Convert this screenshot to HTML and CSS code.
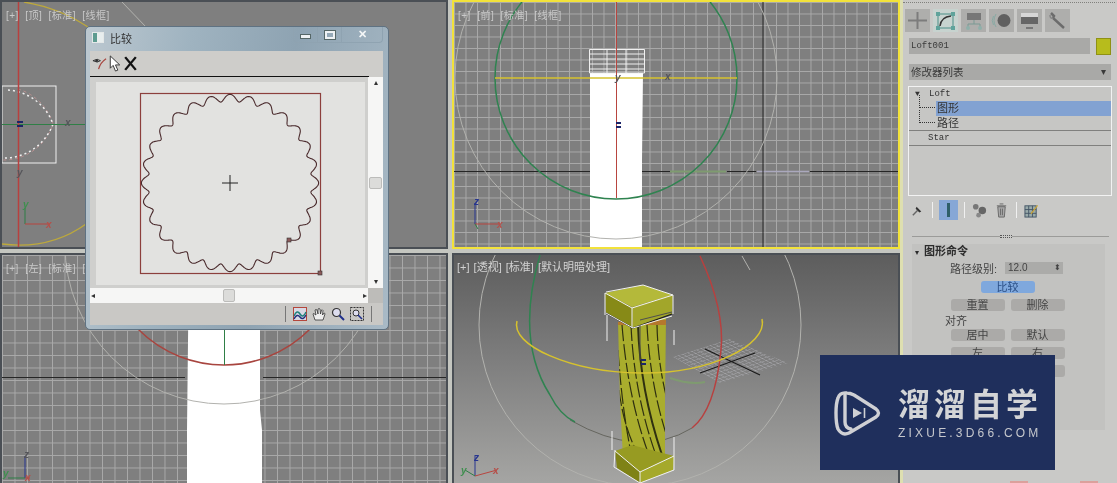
FILE: index.html
```html
<!DOCTYPE html>
<html lang="zh-CN">
<head>
    <meta charset="UTF-8">
    <meta name="viewport" content="width=device-width, initial-scale=1.0">
    <title>放样比较</title>
    <link rel="stylesheet" href="styles.css">
</head>
<body>
<div class="app">
    <div class="viewports">
        <!-- top -->
        <div class="viewport">
            <svg class="scene" viewBox="2 2 444 245">
                <path class="ln-yellow" d="M24 2 Q60 8 88 27"/>
                <path class="ln-yellow" d="M2 244 Q50 250 86 224"/>
                <path class="ln-grey" d="M122 2 L146 27"/>
                <rect x="2" y="86" width="54" height="77" class="ln-white"/>
                <path class="ln-pink" stroke-dasharray="3 3" d="M18 89 A52 52 0 0 1 53 124 A52 52 0 0 1 2 160"/>
                <path class="ln-white dashed" d="M8 90 A52 52 0 0 1 53 124 A52 52 0 0 1 2 158"/>
                <path class="ln-green" d="M2 124.500 H85"/>
                <path class="ln-red wide" d="M18.500 2 V247"/>
                <path class="ln-blue wide" d="M17 122 H23 M17 126 H23"/>
                <path class="ln-green" d="M25 224 V208"/>
                <path class="ln-red" d="M25 224 H50"/>
                <text x="65" y="126" class="ax ax-dark">x</text>
                <text x="17" y="176" class="ax ax-dark">y</text>
                <text x="23" y="208" class="ax ax-green">y</text>
                <text x="46" y="228" class="ax ax-red">x</text>
            </svg>
            <span class="vp-label">[+] [顶] [标准] [线框]</span>
        </div>

        <!-- front -->
        <div class="viewport active grid">
            <svg class="scene" viewBox="454 2 444 245">
                <path class="ln-black" d="M454 171.500 H592 M641 171.500 H670 M727 171.500 H756 M810 171.500 H898"/>
                <path class="ln-sage" d="M670 171.500 H726"/>
                <path class="ln-lilac" d="M757 171.500 H809"/>
                <path class="ln-black" d="M763 2 V247"/>
                <path class="fill-white" d="M590 73 H643 L642 160 V247 H590 Z"/>
                <circle cx="616" cy="78" r="161" class="ln-grey"/>
                <circle cx="616" cy="78" r="121" class="ln-green wide"/>
                <path class="ln-yellow wide" d="M495 78 H737"/>
                <path class="ln-white" d="M589.500 49.500 H644.500 V73 H589.500 Z M589.500 54 H644.500 M589.500 59 H644.500 M589.500 64 H644.500 M589.500 69 H644.500 M607 49 V73 M626 49 V73"/>
                <path class="ln-red" d="M616.500 2 V198"/>
                <path class="ln-blue wide" d="M616 123 H621 M616 127 H621"/>
                <path class="ln-blue" d="M475 224 V203"/>
                <path class="ln-red" d="M475 224 H500"/>
                <path class="ln-green" d="M475 224 L478 229"/>
                <text x="615" y="81" class="ax ax-dark">y</text>
                <text x="665" y="80" class="ax ax-dark">x</text>
                <text x="474" y="205" class="ax ax-blue">z</text>
                <text x="497" y="228" class="ax ax-red">x</text>
            </svg>
            <span class="vp-label">[+] [前] [标准] [线框]</span>
        </div>

        <!-- left -->
        <div class="viewport grid grid-left">
            <svg class="scene" viewBox="2 255 444 228">
                <path class="ln-black" d="M2 377.500 H185 M263 377.500 H448"/>
                <path class="fill-white" d="M189 253 H260 V410 L262 430 V483 H187 V430 Z"/>
                <circle cx="224" cy="245" r="159" class="ln-grey"/>
                <circle cx="224" cy="244" r="121" class="ln-redarc wide"/>
                <path class="ln-green" d="M224.500 255 V365"/>
                <path class="ln-blue" d="M25 478 V456"/>
                <path class="ln-green" d="M25 478 H8"/>
                <path class="ln-red" d="M25 478 H30"/>
                <text x="24" y="458" class="ax ax-dark">z</text>
                <text x="3" y="477" class="ax ax-green">y</text>
                <text x="25" y="481" class="ax ax-red">x</text>
            </svg>
            <span class="vp-label">[+] [左] [标准] [线框]</span>
        </div>

        <!-- perspective -->
        <div class="viewport perspective">
            <svg class="scene" viewBox="454 255 444 228">
                <defs>
                    <pattern id="plane-cells" patternUnits="userSpaceOnUse" width="8" height="8" patternTransform="matrix(.57 -.18 .47 .26 673 357)">
                        <path d="M0 0 H8 M0 0 V8" stroke="#bdbdc4" stroke-width="1.300" fill="none"/>
                    </pattern>
                    <clipPath id="shaft-clip">
                        <path d="M618 322 L666 318 L665 400 L665 458 L623 458 L620 400 Z"/>
                    </clipPath>
                </defs>
                <circle cx="640" cy="325" r="161" class="ln-grey"/>
                <path class="ln-greyarc wide" d="M570 420 Q640 460 692 428"/>
                <path fill="url(#plane-cells)" d="M673 357 L730 339 L788 363 L720 383 Z"/>
                <path class="ln-black wide" d="M705 349 L760 375 M700 373 L755 353"/>
                <path class="ln-green wide" d="M540 255 Q515 340 550 395 Q560 415 575 422"/>
                <path class="ln-sage wide" d="M670 378 Q690 385 705 382"/>
                <path class="ln-red wide" d="M700 256 Q725 310 721 350 Q715 410 692 428"/>
                <path class="ln-grey" d="M742 256 L750 270"/>

                <g clip-path="url(#shaft-clip)">
                    <rect x="615" y="315" width="55" height="150" fill="#a9ad2d"/>
                    <path class="stripe" d="M622 325 Q628 400 650 458"/>
                    <path class="stripe" d="M631 325 Q634 395 657 458"/>
                    <path class="stripe thick" d="M638 325 Q640 390 662 455"/>
                    <path class="stripe" d="M647 325 Q650 385 668 440"/>
                    <path class="stripe" d="M657 325 Q658 370 670 410"/>
                    <path class="stripe" d="M618 350 Q622 410 632 458"/>
                    <path class="stripe" d="M619 390 Q624 430 640 458"/>
                    <rect x="615" y="320" width="52" height="5" fill="#b5782c"/>
                </g>
                <path class="ln-yellow wide" d="M517 321 C510 345 570 372 640 373 C710 374 768 345 762 319"/>

                <path fill="#878a17" d="M605 293 L632 307 L633 328 L606 313 Z"/>
                <path fill="#a2a62a" d="M632 307 L673 295 L672 314 L633 328 Z"/>
                <path fill="#b4b93a" d="M605 293 L643 285 L673 295 L632 307 Z"/>
                <path class="ln-black wide" d="M606 313 L633 328 L672 314"/>
                <path class="ln-white wide" d="M605 293 V315 M606 292 L643 285 L673 295 L632 308 L605 293 M632 308 V328 M673 295 V314 M606 313 L633 328 L672 316 M607 315 V341 M674 330 V345"/>
                <path class="ln-dark" d="M640 325 V360 M640 320 L672 312"/>
                <path class="ln-blue wide" d="M641 360 H646 M641 364 H646"/>

                <path fill="#7f8216" d="M615 451 L640 472 L640 483 L617 468 Z"/>
                <path fill="#a5a92b" d="M640 472 L674 456 L673 470 L640 483 Z"/>
                <path fill="#979b22" d="M615 451 L632 445 L674 456 L640 472 Z"/>
                <path class="ln-white wide" d="M615 450 L614 467 L640 483 M640 472 L674 456 V470 L640 483 V472 M615 451 L640 472 M612 431 V450 M674 437 V456"/>

                <path class="ln-blue" d="M475 476 V455"/>
                <path class="ln-red" d="M475 476 L497 470"/>
                <path class="ln-green" d="M475 476 L465 470"/>
                <text x="474" y="461" class="ax ax-blue">z</text>
                <text x="493" y="474" class="ax ax-red">x</text>
                <text x="461" y="474" class="ax ax-green">y</text>
            </svg>
            <span class="vp-label">[+] [透视] [标准] [默认明暗处理]</span>
        </div>
    </div>

    <aside class="panel">
        <div class="panel-dots"></div>
        <div class="tabs">
            <div class="tab"><svg viewBox="0 0 25 23"><path d="M12.500 3 V20 M3 11.500 H22" stroke="#7c7c7c" stroke-width="2"/></svg></div>
            <div class="tab tab-on"><svg viewBox="0 0 25 23"><rect x="5" y="5" width="15" height="14" fill="none" stroke="#4d8f88"/><path d="M3 3h4v4h-4z M18 3h4v4h-4z M3 17h4v4h-4z M18 17h4v4h-4z" fill="#5fa39b"/><path d="M7 17 Q8 8 18 7" fill="none" stroke="#333" stroke-width="1.500"/></svg></div>
            <div class="tab"><svg viewBox="0 0 25 23"><rect x="6" y="4" width="14" height="7" fill="#777"/><path d="M13 11 V15 M7 19 V15 H19 V19" fill="none" stroke="#7a9a94"/><circle cx="7" cy="19" r="2" fill="#8fb0aa"/><circle cx="19" cy="19" r="2" fill="#8fb0aa"/></svg></div>
            <div class="tab"><svg viewBox="0 0 25 23"><circle cx="15" cy="11.500" r="6.500" fill="#606060"/><path d="M7 5 Q3 11.500 7 18 M4.500 7 Q2 11.500 4.500 16" fill="none" stroke="#88aaa4"/></svg></div>
            <div class="tab"><svg viewBox="0 0 25 23"><rect x="4" y="4" width="17" height="11" fill="#666"/><rect x="4" y="4" width="17" height="4" fill="#d6d6d6"/><path d="M9 19 H16" stroke="#777" stroke-width="2"/></svg></div>
            <div class="tab"><svg viewBox="0 0 25 23"><path d="M6 4 L9 7 L8 9 L19 19" fill="none" stroke="#6c6c6c" stroke-width="2.500"/><path d="M5 6 Q5 10 8 9" fill="none" stroke="#888" stroke-width="1.500"/></svg></div>
        </div>

        <div class="name-row">
            <div class="field name-field">Loft001</div>
            <div class="swatch"></div>
        </div>

        <div class="field modifier-list">修改器列表<span class="caret">▾</span></div>

        <div class="stack">
            <div class="stack-row mono"><span class="stack-arrow">▼</span>Loft</div>
            <div class="stack-row sub selected"><span class="tree-line"></span><span class="sub-name">图形</span></div>
            <div class="stack-row sub"><span class="tree-line"></span><span class="sub-name">路径</span></div>
            <div class="stack-row mono plain">Star</div>
        </div>

        <div class="stack-tools">
            <svg class="tool" viewBox="0 0 16 16"><path d="M3 13 L8 8" stroke="#666" stroke-width="1.500"/><path d="M7 4 L12 9 L10 10 L6 6 Z" fill="#333"/></svg>
            <span class="tool-sep"></span>
            <span class="tool-on"><span class="pipe"></span></span>
            <span class="tool-sep"></span>
            <svg class="tool" viewBox="0 0 16 16"><circle cx="4" cy="4" r="3" fill="#777"/><circle cx="11" cy="8" r="4" fill="#666"/><circle cx="7" cy="13" r="2.500" fill="#888"/></svg>
            <svg class="tool" viewBox="0 0 16 16"><path d="M4 4 H12 L11 15 H5 Z" fill="#a8a8a8" stroke="#666"/><path d="M3 3 H13 M6 1 H10 M7 6 V13 M9 6 V13" stroke="#666" fill="none"/></svg>
            <span class="tool-sep"></span>
            <svg class="tool" viewBox="0 0 16 16"><rect x="1" y="3" width="12" height="12" fill="#9aa" stroke="#456"/><path d="M1 7 H13 M1 11 H13 M5 3 V15 M9 3 V15" stroke="#456"/><path d="M7 11 L14 2 L15 3 L8 12 Z" fill="#c9a53a"/></svg>
        </div>

        <div class="sash"><span class="sash-grip"></span></div>

        <section class="rollout">
            <h3 class="rollout-title"><span class="rollout-mark">▾</span>图形命令</h3>
            <div class="level-row">
                <span>路径级别:</span>
                <div class="spinner">12.0<span class="spin-arrows">⬍</span></div>
            </div>
            <div class="btn-row"><span class="btn btn-on">比较</span></div>
            <div class="btn-row pair"><span class="btn">重置</span><span class="btn">删除</span></div>
            <div class="align-label">对齐</div>
            <div class="btn-row pair"><span class="btn">居中</span><span class="btn">默认</span></div>
            <div class="btn-row pair"><span class="btn">左</span><span class="btn">右</span></div>
            <div class="btn-row pair"><span class="btn"></span><span class="btn"></span></div>
        </section>
        <div class="panel-marks"><span class="mark"></span><span class="mark"></span></div>
    </aside>

    <!-- compare window -->
    <div class="dialog">
        <div class="title-bar">
            <span class="title-icon"></span>
            <span class="title-text">比较</span>
            <div class="win-btns">
                <span class="win-btn"><span class="glyph-min"></span></span>
                <span class="win-btn"><span class="glyph-max"></span></span>
                <span class="win-btn win-close">✕</span>
            </div>
        </div>
        <div class="client">
            <div class="dlg-tools">
                <svg class="dlg-tool" viewBox="0 0 16 18"><path d="M1 6 Q6 3 9 6 Q6 9 1 6 Z" fill="none" stroke="#333"/><circle cx="5" cy="6" r="1.500" fill="#333"/><path d="M15 4 Q9 8 7 15" fill="none" stroke="#a8463f" stroke-width="1.300"/></svg>
                <svg class="dlg-tool arrow" viewBox="0 0 12 18"><path d="M1 1 L1 14 L4 11 L6.500 17 L9 16 L6.500 10.500 L11 10.500 Z" fill="#fff" stroke="#333"/></svg>
                <svg class="dlg-tool" viewBox="0 0 14 16"><path d="M2 2 L12 14 M12 2 L2 14" stroke="#111" stroke-width="2.200"/></svg>
            </div>
            <div class="view-wrap">
                <div class="shape-view">
                    <svg class="shape-canvas" viewBox="96 82 269 203">
                        <rect x="140.500" y="93.500" width="180" height="180" fill="none" stroke="#8c3f3c" stroke-width="1.200"/>
                        <path id="star-curve" fill="none" stroke="#4a2a2c" stroke-width="1.100"/>
                        <path d="M230 175 V191 M222 183 H238" stroke="#222" stroke-width="1"/>
                        <rect x="318" y="271" width="4" height="4" fill="#8c5a5a" stroke="#333" stroke-width=".6"/>
                        <rect x="287" y="238" width="4" height="4" fill="#8c5a5a" stroke="#333" stroke-width=".6"/>
                    </svg>
                </div>
                <div class="vbar">
                    <span class="bar-arrow">▴</span>
                    <span class="vthumb"></span>
                    <span class="bar-arrow">▾</span>
                </div>
                <div class="hbar">
                    <span class="bar-arrow">◂</span>
                    <span class="hthumb"></span>
                    <span class="bar-arrow">▸</span>
                </div>
                <div class="bar-corner"></div>
            </div>
            <div class="dlg-foot">
                <span class="foot-sep"></span>
                <svg class="foot-icon" viewBox="0 0 14 14"><rect x=".5" y=".5" width="13" height="13" fill="#d8d8e4" stroke="#b5473c"/><path d="M1 9 Q4 2 7 7 T13 5" fill="none" stroke="#1d7f7a" stroke-width="1.500"/><path d="M1 12 Q4 6 7 10 T13 8" fill="none" stroke="#23307c" stroke-width="1.500"/></svg>
                <svg class="foot-icon" viewBox="0 0 14 14"><path d="M3 13 L1 7 Q1 6 2.500 7 L4 8 L3 3 Q4 2 5 3 L6 7 L6 2 Q7 1 8 2 L8.500 7 L9.500 3 Q10.500 2.500 11 3.500 L10.500 8 L12 6 Q13 6 13 7 L11 13 Z" fill="#eee" stroke="#333" stroke-width=".8"/></svg>
                <svg class="foot-icon" viewBox="0 0 14 14"><circle cx="5.500" cy="5.500" r="4" fill="#dde" stroke="#333" stroke-width="1.200"/><path d="M8.500 8.500 L13 13" stroke="#1f2f8c" stroke-width="2"/></svg>
                <svg class="foot-icon" viewBox="0 0 14 14"><rect x=".5" y=".5" width="13" height="13" fill="none" stroke="#333" stroke-dasharray="2 1"/><circle cx="6" cy="6" r="3" fill="#dde" stroke="#333"/><path d="M8 8 L12 12" stroke="#1f2f8c" stroke-width="1.600"/></svg>
                <span class="foot-sep"></span>
            </div>
        </div>
    </div>

    <!-- watermark -->
    <div class="watermark">
        <svg class="wm-logo" viewBox="0 0 48 48">
            <path d="M14 4 Q7 3 5 9 Q3 14 3 24 Q3 35 5 40 Q9 47 16 44 L43 28 Q48 24 43 20 L21 6 Q17 4 14 4 Z" fill="none" stroke="#cfd0d4" stroke-width="3.400" stroke-linejoin="round"/>
            <path d="M12 6 V33 Q12 39 18 40" fill="none" stroke="#cfd0d4" stroke-width="3.400" stroke-linecap="round"/>
            <path d="M20 19 L29 24 L20 29 Z" fill="#cfd0d4"/>
            <path d="M31.500 19 V29" stroke="#cfd0d4" stroke-width="1.600"/>
        </svg>
        <div class="wm-text">
            <div class="wm-name">溜溜自学</div>
            <div class="wm-url">ZIXUE.3D66.COM</div>
        </div>
    </div>
</div>
<script src="script.js"></script>
</body>
</html>
```

FILE: styles.css
```css
* {
    box-sizing: border-box;
}
body {
    margin: 0;
    font-family: "Liberation Sans", "Noto Sans CJK SC", sans-serif;
    background: #c9c9c7;
}
.app {
    position: relative;
    display: grid;
    grid-template-columns: 900px 217px;
    width: 1117px;
    height: 483px;
    overflow: hidden;
    filter: blur(0.35px);
}

/* viewports */
.viewports {
    display: grid;
    grid-template-columns: 448px 448px;
    grid-template-rows: 249px 230px;
    gap: 4px;
    background: #c4c6c0;
}
.viewport {
    position: relative;
    border: 2px solid #4a4f55;
    background-color: #7f7f7f;
    overflow: hidden;
}
.viewport.active {
    border-color: #f2e23a;
}
.grid {
    background-image:
        linear-gradient(#a9a9a9 1px, transparent 1px),
        linear-gradient(90deg, #a9a9a9 1px, transparent 1px);
    background-size: 11.5px 11.5px;
}
.grid-left {
    background-size: 12.5px 12.5px;
    border-bottom: 0;
}
.perspective {
    border-bottom: 0;
    background: linear-gradient(#5d5d5d 0%, #7d7d7d 45%, #a5a5a3 100%);
}
.scene {
    position: absolute;
    inset: 0;
    width: 100%;
    height: 100%;
    fill: none;
}
.scene .fill-white { fill: #fff; }
.vp-label {
    position: absolute;
    left: 4px;
    top: 8px;
    font-size: 10px;
    line-height: 11px;
    color: #c9c9c9;
    letter-spacing: 0.5px;
    word-spacing: 3px;
    white-space: nowrap;
}
.perspective .vp-label {
    left: 3px;
    top: 7px;
    color: #d2d2d2;
    font-size: 11px;
    letter-spacing: 0;
    word-spacing: 1px;
}
.ln-white { stroke: #f0f0f0; stroke-width: 1; }
.ln-white.dashed { stroke-dasharray: 2 3; stroke-width: 1.500; }
.ln-pink { stroke: #b88f8f; stroke-width: 1; }
.ln-yellow { stroke: #bda93c; stroke-width: 1.300; }
.ln-yellow.wide { stroke: #d6c22e; stroke-width: 1.500; }
.ln-grey { stroke: #b2b2ae; stroke-width: 1; }
.ln-greyarc { stroke: #66665f; }
.ln-green { stroke: #2f7f46; stroke-width: 1; }
.ln-green.wide { stroke: #2f8350; stroke-width: 1.500; }
.ln-sage { stroke: #7f9b70; stroke-width: 2; }
.ln-lilac { stroke: #aaa8bd; stroke-width: 1.500; }
.ln-red { stroke: #b8453f; stroke-width: 1; }
.ln-red.wide { stroke: #b8403f; stroke-width: 1.500; }
.ln-redarc { stroke: #a8453f; stroke-width: 1.500; }
.ln-blue { stroke: #27358f; stroke-width: 1; }
.ln-blue.wide { stroke: #1c2468; stroke-width: 2; }
.ln-black { stroke: #262626; stroke-width: 1; }
.ln-black.wide { stroke: #1c1c1c; stroke-width: 1.300; }
.ln-dark { stroke: #4f4f4f; stroke-width: 1; }
.stripe { stroke: #2f3010; stroke-width: 1.200; stroke-dasharray: 16 3; }
.stripe.thick { stroke-width: 2; stroke-dasharray: none; }
.ax {
    font-family: "Liberation Sans", sans-serif;
    font-size: 10px;
    font-style: italic;
    font-weight: bold;
}
.ax-dark { fill: #55555a; }
.ax-green { fill: #3f8f4f; }
.ax-red { fill: #b5504a; }
.ax-blue { fill: #27358f; }

/* command panel */
.panel {
    display: flex;
    flex-direction: column;
    height: 483px;
    overflow: hidden;
    border-left: 3px solid #dedfb0;
    background: #c9c9c7;
}
.panel-dots {
    margin: 2px 2px 0 0;
    border-top: 1px dotted #80807c;
}
.tabs {
    display: flex;
    gap: 3px;
    height: 23px;
    margin-top: 6px;
    padding-left: 2px;
}
.tab {
    width: 25px;
    background: #aeaeac;
}
.tab-on {
    background: #c7d3cf;
}
.tab svg {
    display: block;
    width: 25px;
    height: 23px;
}
.name-row {
    display: flex;
    gap: 6px;
    margin: 6px 0 0 6px;
}
.field {
    background: #a9a9a7;
    color: #3a3a3a;
    font-size: 10.500px;
    line-height: 16px;
}
.name-field {
    width: 181px;
    height: 16px;
    padding-left: 2px;
    font-family: "Liberation Mono", monospace;
    font-size: 9px;
}
.swatch {
    width: 15px;
    height: 17px;
    background: #b7bc1c;
    border: 1px solid #8f9114;
}
.modifier-list {
    position: relative;
    width: 202px;
    height: 16px;
    margin: 9px 0 0 6px;
    padding-left: 2px;
}
.caret {
    position: absolute;
    right: 5px;
    top: 0;
    font-size: 10px;
}
.stack {
    width: 204px;
    height: 111px;
    margin: 6px 0 0 5px;
    border: 1px solid #f2f2f2;
    background: #c6c6c4;
}
.stack-row {
    position: relative;
    height: 14px;
    font-size: 11px;
    line-height: 14px;
    color: #333;
}
.selected {
    height: 15px;
    line-height: 15px;
}
.mono {
    padding-left: 6px;
    font-family: "Liberation Mono", monospace;
    font-size: 9px;
}
.stack-arrow {
    display: inline-block;
    width: 14px;
    font-size: 8px;
}
.plain {
    height: 16px;
    padding-left: 19px;
    border-top: 1px solid #80807e;
    border-bottom: 1px solid #80807e;
}
.sub {
    padding-left: 27px;
}
.sub-name {
    display: block;
    height: 100%;
    padding-left: 1px;
}
.selected .sub-name {
    background: #82a2d2;
}
.tree-line {
    position: absolute;
    left: 10px;
    top: -6px;
    width: 16px;
    height: 13px;
    border-left: 1px dotted #333;
    border-bottom: 1px dotted #333;
}
.stack-tools {
    display: flex;
    align-items: center;
    gap: 7px;
    height: 22px;
    margin-top: 3px;
    padding-left: 7px;
}
.tool {
    width: 15px;
    height: 15px;
}
.tool-sep {
    width: 1px;
    height: 16px;
    background: #f0f0f0;
}
.tool-on {
    display: flex;
    justify-content: center;
    align-items: center;
    width: 19px;
    height: 20px;
    margin: 0 -1px;
    background: #86a7d6;
}
.pipe {
    width: 3px;
    height: 14px;
    background: #2f5f68;
}
.sash {
    position: relative;
    height: 1px;
    margin: 15px 8px 0 9px;
    background: #9b9b99;
}
.sash-grip {
    position: absolute;
    left: 88px;
    top: -1px;
    width: 12px;
    height: 3px;
    background: #c9c9c7;
    border-top: 1px dotted #555;
    border-bottom: 1px dotted #555;
}
.rollout {
    flex: none;
    width: 193px;
    height: 186px;
    margin: 7px 0 0 9px;
    background: #c2c2c0;
}
.rollout-title {
    margin: 0;
    padding-left: 3px;
    font-size: 11px;
    line-height: 14px;
    color: #2c2c2c;
}
.rollout-mark {
    display: inline-block;
    width: 9px;
    font-size: 8px;
    font-weight: normal;
}
.level-row {
    display: flex;
    align-items: center;
    gap: 8px;
    height: 14px;
    margin-top: 1px;
    padding-left: 38px;
    font-size: 11px;
    color: #444;
}
.spinner {
    position: relative;
    width: 58px;
    height: 12px;
    padding-left: 3px;
    background: #ababa9;
    font-size: 10px;
    line-height: 12px;
}
.spin-arrows {
    position: absolute;
    right: 2px;
    top: 0;
    font-size: 8px;
}
.btn-row {
    display: flex;
    justify-content: center;
    gap: 6px;
    margin-top: 6px;
    padding-right: 2px;
}
.btn {
    width: 54px;
    height: 12px;
    background: #abaaa8;
    border-radius: 3px;
    font-size: 11px;
    line-height: 12px;
    color: #444;
    text-align: center;
}
.btn-on {
    background: #7fa8dd;
    color: #2b4f86;
}
.align-label {
    margin-top: 4px;
    padding-left: 33px;
    font-size: 11px;
    line-height: 13px;
    color: #444;
}
.align-label + .btn-row {
    margin-top: 1px;
}
.panel-marks {
    display: flex;
    gap: 52px;
    margin: 51px 0 0 107px;
}
.mark {
    width: 18px;
    height: 2px;
    background: #dca09c;
}

/* compare window */
.dialog {
    position: absolute;
    left: 85px;
    top: 26px;
    width: 304px;
    height: 304px;
    padding: 0 5px 5px 4px;
    border: 1px solid #5f7282;
    border-radius: 5px;
    background: linear-gradient(100deg, #bcc8d0 0%, #9fb3c0 30%, #8ea3b2 60%, #a9bac6 100%);
}
.title-bar {
    display: flex;
    align-items: center;
    height: 24px;
    padding: 0 0 3px 2px;
}
.title-icon {
    width: 12px;
    height: 11px;
    margin-right: 6px;
    background: linear-gradient(90deg, #5d9b90 45%, #e8eeee 45%);
    border: 1px solid #e4e8e8;
}
.title-text {
    font-size: 11px;
    color: #333;
}
.win-btns {
    display: flex;
    align-self: flex-start;
    margin-left: auto;
    border: 1px solid #8fa3b1;
    border-top: 0;
    border-radius: 0 0 4px 4px;
}
.win-btn {
    display: flex;
    justify-content: center;
    align-items: center;
    width: 24px;
    height: 15px;
    border-right: 1px solid #8fa3b1;
    color: #f4f6f7;
}
.win-close {
    width: 40px;
    border-right: 0;
    font-size: 11px;
    font-weight: bold;
}
.glyph-min {
    width: 11px;
    height: 5px;
    margin-top: 4px;
    background: #eef1f3;
    border: 1px solid #566;
}
.glyph-max {
    width: 10px;
    height: 8px;
    border: 2px solid #eef1f3;
    outline: 1px solid #566;
}
.client {
    height: 274px;
    background: #c9c8c5;
}
.dlg-tools {
    display: flex;
    align-items: center;
    gap: 2px;
    height: 26px;
    padding-left: 2px;
    background: #cecdca;
    border-bottom: 1px solid #111;
    margin-right: 14px;
    box-shadow: 14px 0 0 #cecdca;
}
.dlg-tool {
    width: 15px;
    height: 17px;
}
.dlg-tool.arrow {
    width: 12px;
}
.view-wrap {
    display: grid;
    grid-template-columns: 278px 15px;
    grid-template-rows: 211px 15px;
}
.shape-view {
    padding: 5px 3px 3px 6px;
    background: #cfcfcd;
}
.shape-canvas {
    display: block;
    width: 269px;
    height: 203px;
    background: #e2e2e0;
}
.vbar, .hbar {
    display: flex;
    justify-content: space-between;
    align-items: center;
    background: #f6f6f5;
    color: #333;
    font-size: 8px;
    line-height: 10px;
}
.vbar {
    flex-direction: column;
    padding: 1px 0;
}
.hbar {
    padding: 0 1px;
}
.vthumb, .hthumb {
    display: block;
    background: #dcdcda;
    border: 1px solid #bcbcba;
    border-radius: 2px;
}
.vthumb {
    width: 13px;
    height: 12px;
}
.hthumb {
    width: 12px;
    height: 13px;
}
.bar-corner {
    background: #bdbcb9;
}
.dlg-foot {
    display: flex;
    align-items: center;
    justify-content: flex-end;
    gap: 5px;
    height: 22px;
    padding-right: 9px;
}
.foot-icon {
    width: 14px;
    height: 14px;
}
.foot-sep {
    width: 1px;
    height: 16px;
    margin: 0 2px;
    background: #777;
}

/* watermark */
.watermark {
    position: absolute;
    left: 820px;
    top: 355px;
    display: flex;
    align-items: center;
    width: 235px;
    height: 115px;
    padding: 0 0 2px 13px;
    background: #1f2f5c;
}
.wm-logo {
    width: 48px;
    height: 48px;
    margin: 2px 17px 0 0;
}
.wm-name {
    font-family: "Noto Sans CJK SC", sans-serif;
    font-size: 32px;
    font-weight: 700;
    line-height: 34px;
    letter-spacing: 4px;
    white-space: nowrap;
    color: #d3d4d6;
}
.wm-url {
    margin-top: 8px;
    font-size: 12px;
    line-height: 12px;
    letter-spacing: 3.200px;
    white-space: nowrap;
    color: #c5c7cc;
}
```

FILE: script.js
```js
// the star shape in the compare window: a wavy circle
const starCurve = document.getElementById('star-curve');
const lobes = 28;
const points = [];
for (let i = 0; i <= 720; i++) {
    const a = (i / 720) * Math.PI * 2;
    const wave = a * lobes;
    const skewed = a + 0.009 * Math.sin(wave);
    const r = 85 + 3.6 * Math.cos(wave);
    const x = 230 + r * Math.sin(skewed);
    const y = 183 - r * Math.cos(skewed);
    points.push(x.toFixed(1) + ' ' + y.toFixed(1));
}
starCurve.setAttribute('d', 'M' + points.join(' L') + ' Z');
```
